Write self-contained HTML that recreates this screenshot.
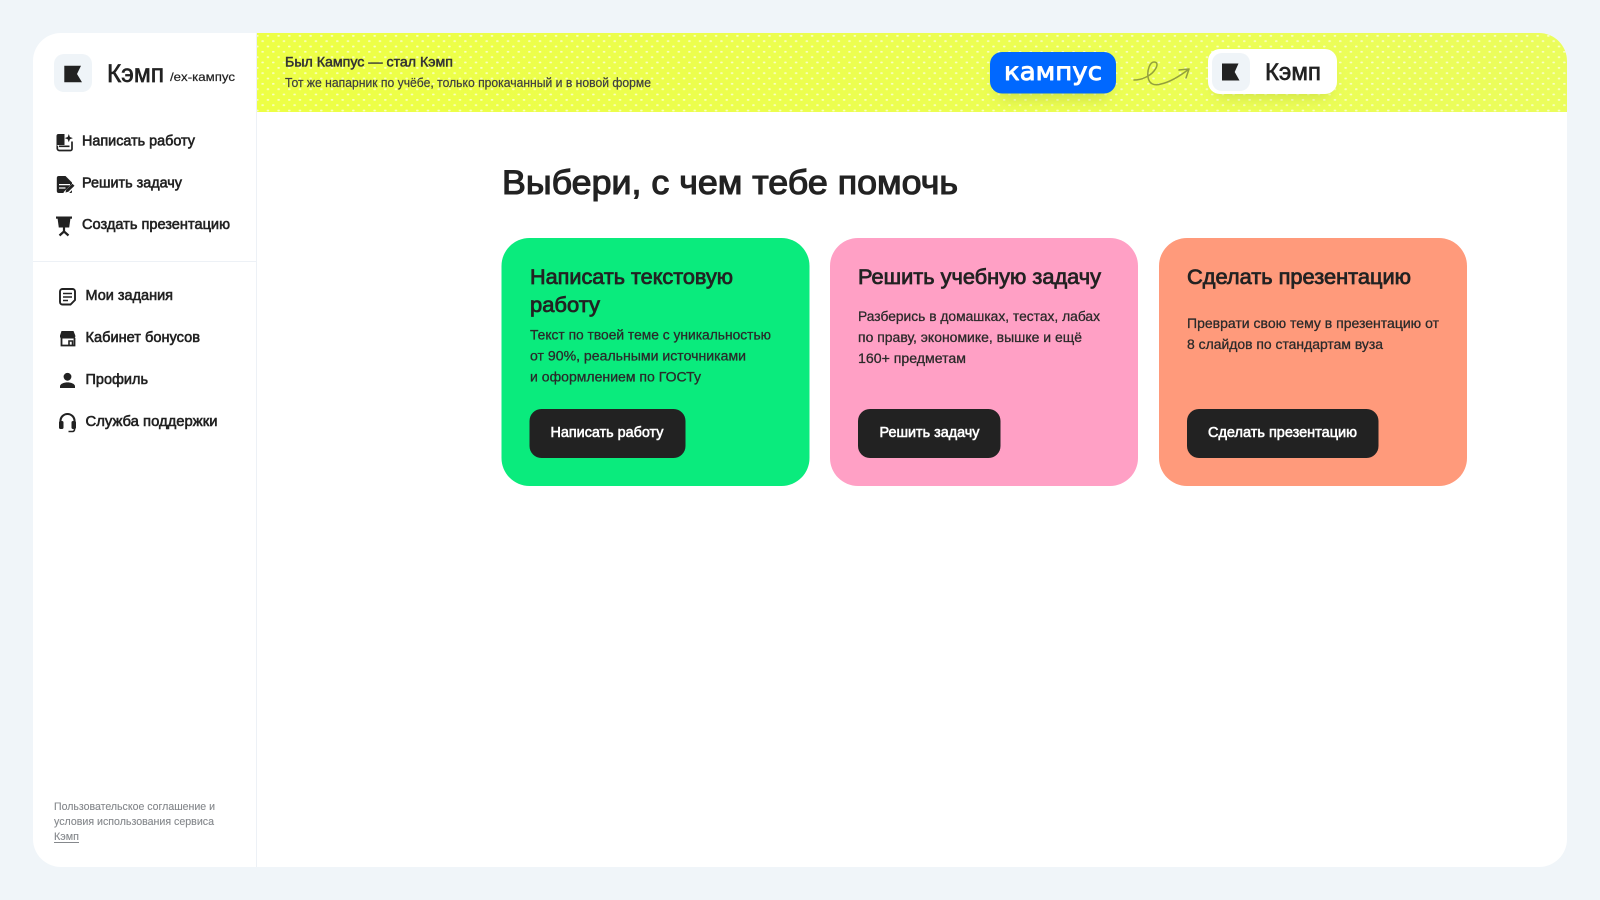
<!DOCTYPE html>
<html lang="ru">
<head>
<meta charset="utf-8">
<title>Кэмп</title>
<style>
html,body{margin:0;padding:0;width:1600px;height:900px;overflow:hidden;background:#f0f5f9}
svg{display:block;filter:blur(.35px)}
text{font-family:"Liberation Sans",sans-serif;fill:#222;stroke:#222;stroke-width:.3px}
.m{font-size:15px;stroke-width:.6px}
.t{font-size:21px;stroke-width:.75px}
.d{font-size:14px;stroke-width:.28px;fill:#2a2a2a;stroke:#2a2a2a}
.b{font-size:15px;fill:#fff;stroke:#fff;stroke-width:.6px}
.f{font-size:11px;fill:#85888c;stroke:#85888c;stroke-width:.12px}
</style>
</head>
<body>
<svg width="1600" height="900" viewBox="0 0 1600 900" xmlns="http://www.w3.org/2000/svg">
<defs>
<clipPath id="pc"><rect x="33" y="33" width="1534" height="834" rx="28"/></clipPath>
<pattern id="dots" x="256" y="33" width="10.67" height="10.67" patternUnits="userSpaceOnUse">
<rect x="0" y="2" width="2.6" height="1.7" rx=".8" fill="#fff" opacity=".65"/>
<rect x="5.33" y="7.33" width="2.6" height="1.7" rx=".8" fill="#fff" opacity=".65"/>
</pattern>
<linearGradient id="yl" x1="0" x2="1" y1="0" y2="0">
<stop offset="0" stop-color="#edff45"/><stop offset="1" stop-color="#ebfd5c"/>
</linearGradient>
<filter id="sh" x="-30%" y="-60%" width="160%" height="240%"><feGaussianBlur stdDeviation="6"/></filter>
</defs>

<rect width="1600" height="900" fill="#f0f5f9"/>
<rect x="33" y="33" width="1534" height="834" rx="28" fill="#fff"/>

<g clip-path="url(#pc)">
<rect x="256" y="33" width="1311" height="79" fill="url(#yl)"/>
<rect x="256" y="33" width="1311" height="79" fill="url(#dots)"/>
<rect x="256" y="33" width="1" height="834" fill="#edf1f6"/>
<rect x="33" y="261" width="223" height="1" fill="#edf1f6"/>
<rect x="996" y="62" width="114" height="38" rx="12" fill="#b9cf3a" opacity=".5" filter="url(#sh)"/>
<rect x="1214" y="60" width="118" height="38" rx="12" fill="#b9cf3a" opacity=".5" filter="url(#sh)"/>
</g>

<!-- sidebar logo -->
<rect x="54" y="54" width="38" height="38" rx="10" fill="#eff4f8"/>
<path d="M64.300 65.700H81L77 74L82 82.300H64.300Z" fill="#222"/>
<text x="107" y="82" font-size="25" textLength="57" lengthAdjust="spacingAndGlyphs" style="stroke-width:.65px">Кэмп</text>
<text x="170" y="81" font-size="12" textLength="65" lengthAdjust="spacingAndGlyphs" style="stroke-width:.2px">/ex-кампус</text>

<!-- menu 1 -->
<g fill="#222">
<path d="M56.500 136a2 2 0 0 1 2-2H64.500V145H59a2.500 2.500 0 0 0-2.500 2z"/>
<path d="M57.300 146V148.500a2 2 0 0 0 2 2H70.500a1.500 1.500 0 0 0 1.500-1.500V141.500M59 146.300h10.500" fill="none" stroke="#222" stroke-width="1.700"/>
<path d="M68.800 134l1.100 3 3 1.100-3 1.100-1.100 3-1.100-3-3-1.100 3-1.100z"/>
<path d="M58.800 176H65.500L72 182.500V192a1 1 0 0 1-1 1H58.800a2 2 0 0 1-2-2V178a2 2 0 0 1 2-2z"/>
<path d="M59 184.600h11M59 188h6.500" fill="none" stroke="#fff" stroke-width="1.300"/>
<path d="M65 194l8.500-8.500" fill="none" stroke="#fff" stroke-width="4.500"/>
<path d="M65.500 192.500l.7-2.800 6.200-6 2.100 2.100-6.200 6z"/>
<rect x="56" y="216.500" width="16" height="2.200"/>
<path d="M57.500 218h13l-1.300 9.500h-10.400z"/>
<path d="M64 227v5.500M64 231.500l-4.500 4M64 231.500l4.500 4" fill="none" stroke="#222" stroke-width="2.200"/>
</g>
<text class="m" x="82" y="145.300" textLength="113" lengthAdjust="spacingAndGlyphs">Написать работу</text>
<text class="m" x="82" y="187.300" textLength="100" lengthAdjust="spacingAndGlyphs">Решить задачу</text>
<text class="m" x="82" y="229" textLength="148" lengthAdjust="spacingAndGlyphs">Создать презентацию</text>

<!-- menu 2 -->
<g fill="none" stroke="#222" stroke-width="1.900">
<path d="M62.500 289h10a2.500 2.500 0 0 1 2.500 2.500v8.500l-4.500 4.500h-8a2.500 2.500 0 0 1-2.500-2.500v-10.500a2.500 2.500 0 0 1 2.500-2.500z"/>
<path d="M63 293.500h9M63 297h9M63 300.500h5" stroke-width="1.600"/>
<path d="M61.500 338v7.500h13v-7.500" stroke-width="1.800"/>
<path d="M69 345v-4h3.500v4" stroke-width="1.600"/>
<path d="M60.500 424v-3a7 7 0 0 1 14 0v3" stroke-width="2.100"/>
<path d="M74.500 428v1.500a2 2 0 0 1-2 2h-4" stroke-width="1.600"/>
</g>
<g fill="#222">
<path d="M61.500 331h12l1.800 4.500v1.500a2.100 2.100 0 0 1-2.100 1.500H62.100a2.100 2.100 0 0 1-2.100-1.500v-1.500z"/>
<circle cx="67.500" cy="376.800" r="3.900"/>
<path d="M60 388v-1.600c0-2.700 4.500-4 7.500-4s7.500 1.300 7.500 4V388z"/>
<rect x="59" y="421" width="4.500" height="8" rx="1.500"/>
<rect x="71.500" y="421" width="4.500" height="8" rx="1.500"/>
</g>
<text class="m" x="85.500" y="300" textLength="87.500" lengthAdjust="spacingAndGlyphs">Мои задания</text>
<text class="m" x="85.500" y="342" textLength="114.500" lengthAdjust="spacingAndGlyphs">Кабинет бонусов</text>
<text class="m" x="85.500" y="384" textLength="62.500" lengthAdjust="spacingAndGlyphs">Профиль</text>
<text class="m" x="85.500" y="426" textLength="132" lengthAdjust="spacingAndGlyphs">Служба поддержки</text>

<!-- footer -->
<text class="f" x="54" y="810" textLength="161" lengthAdjust="spacingAndGlyphs">Пользовательское соглашение и</text>
<text class="f" x="54" y="825" textLength="160" lengthAdjust="spacingAndGlyphs">условия использования сервиса</text>
<text class="f" x="54" y="840" textLength="25" lengthAdjust="spacingAndGlyphs">Кэмп</text>
<rect x="54" y="842" width="25" height="1" fill="#85888c"/>

<!-- banner text -->
<text x="285" y="66.500" font-size="14" textLength="168" lengthAdjust="spacingAndGlyphs" style="fill:#333;stroke:#333;stroke-width:.5px">Был Кампус — стал Кэмп</text>
<text x="285" y="87" font-size="13" textLength="366" lengthAdjust="spacingAndGlyphs" style="fill:#3f3f3f;stroke:#3f3f3f;stroke-width:.22px">Тот же напарник по учёбе, только прокачанный и в новой форме</text>

<!-- badges -->
<rect x="990" y="52" width="126" height="41.500" rx="12" fill="#0068ff"/>
<text x="1004" y="80" font-size="25" textLength="98" lengthAdjust="spacingAndGlyphs" style="font-family:'DejaVu Sans',sans-serif;fill:#fff;stroke:#fff;stroke-width:.9px;stroke-linejoin:round">кампус</text>
<path d="M1134 80C1142 80 1150 76 1154 71C1158 66 1158 62 1154 62C1150 62 1147 70 1148 77C1149 84 1154 86 1161 84C1170 82 1180 76 1189 69M1179 70L1189 69L1186 78" fill="none" stroke="#93a03c" stroke-width="1.500" stroke-linecap="round" stroke-linejoin="round"/>
<rect x="1208" y="49" width="129" height="45" rx="12" fill="#fff"/>
<rect x="1212" y="53" width="38" height="38" rx="10" fill="#eff4f8"/>
<path d="M1222 63.500H1238.500L1234.700 72L1239.500 80.500H1222Z" fill="#222"/>
<text x="1265" y="80" font-size="24" textLength="56" lengthAdjust="spacingAndGlyphs" style="stroke-width:.65px">Кэмп</text>

<!-- heading -->
<text x="502" y="194" font-size="34" textLength="456" lengthAdjust="spacingAndGlyphs" style="stroke-width:1.100px">Выбери, с чем тебе помочь</text>

<!-- cards -->
<rect x="501.500" y="238" width="308" height="248" rx="28" fill="#0aeb7d"/>
<rect x="830" y="238" width="308" height="248" rx="28" fill="#ffa0c5"/>
<rect x="1159" y="238" width="308" height="248" rx="28" fill="#ff9a7b"/>

<text class="t" x="530" y="284" textLength="203" lengthAdjust="spacingAndGlyphs">Написать текстовую</text>
<text class="t" x="530" y="312" textLength="70" lengthAdjust="spacingAndGlyphs">работу</text>
<text class="d" x="530" y="339.500" textLength="241" lengthAdjust="spacingAndGlyphs">Текст по твоей теме с уникальностью</text>
<text class="d" x="530" y="360.500" textLength="216" lengthAdjust="spacingAndGlyphs">от 90%, реальными источниками</text>
<text class="d" x="530" y="381.500" textLength="171" lengthAdjust="spacingAndGlyphs">и оформлением по ГОСТу</text>
<rect x="529.500" y="409" width="156" height="49" rx="12" fill="#222"/>
<text class="b" x="550.500" y="437" textLength="113" lengthAdjust="spacingAndGlyphs">Написать работу</text>

<text class="t" x="858" y="284" textLength="243" lengthAdjust="spacingAndGlyphs">Решить учебную задачу</text>
<text class="d" x="858" y="321" textLength="242" lengthAdjust="spacingAndGlyphs">Разберись в домашках, тестах, лабах</text>
<text class="d" x="858" y="342" textLength="224" lengthAdjust="spacingAndGlyphs">по праву, экономике, вышке и ещё</text>
<text class="d" x="858" y="363" textLength="108" lengthAdjust="spacingAndGlyphs">160+ предметам</text>
<rect x="858" y="409" width="142.500" height="49" rx="12" fill="#222"/>
<text class="b" x="879.500" y="437" textLength="100" lengthAdjust="spacingAndGlyphs">Решить задачу</text>

<text class="t" x="1187" y="284" textLength="224" lengthAdjust="spacingAndGlyphs">Сделать презентацию</text>
<text class="d" x="1187" y="328" textLength="252" lengthAdjust="spacingAndGlyphs">Преврати свою тему в презентацию от</text>
<text class="d" x="1187" y="349" textLength="196" lengthAdjust="spacingAndGlyphs">8 слайдов по стандартам вуза</text>
<rect x="1187" y="409" width="191.500" height="49" rx="12" fill="#222"/>
<text class="b" x="1208" y="437" textLength="149" lengthAdjust="spacingAndGlyphs">Сделать презентацию</text>
</svg>
</body>
</html>
